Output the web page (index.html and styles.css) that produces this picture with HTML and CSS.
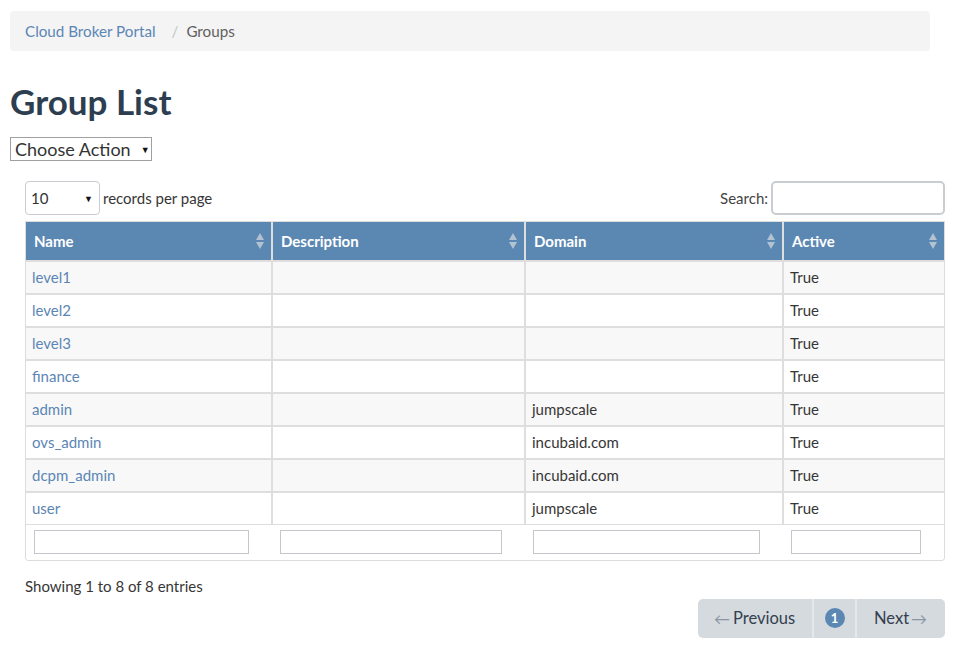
FILE: index.html
```html
<!DOCTYPE html>
<html>
<head>
<meta charset="utf-8">
<link rel="stylesheet" href="styles.css">
</head>
<body>
<div class="page">
  <ol class="breadcrumb">
    <li><a href="#">Cloud Broker Portal</a></li>
    <li class="sep">/</li>
    <li class="current">Groups</li>
  </ol>
  <h1 class="title">Group List</h1>
  <div class="action-select">Choose Action <span class="caret">▼</span></div>

  <div class="dt">
    <div class="dt-top">
      <div class="length">
        <div class="len-select">10 <span class="caret">▼</span></div>
        <span>records per page</span>
      </div>
      <div class="search">
        <span>Search:</span>
        <div class="search-input"></div>
      </div>
    </div>

    <div class="table-wrap">
      <table class="grid">
        <colgroup>
          <col class="c1"><col class="c2"><col class="c3"><col class="c4">
        </colgroup>
        <thead>
          <tr>
            <th>Name<span class="sort"></span></th>
            <th>Description<span class="sort"></span></th>
            <th>Domain<span class="sort"></span></th>
            <th>Active<span class="sort"></span></th>
          </tr>
        </thead>
        <tbody>
          <tr><td><a href="#">level1</a></td><td></td><td></td><td>True</td></tr>
          <tr><td><a href="#">level2</a></td><td></td><td></td><td>True</td></tr>
          <tr><td><a href="#">level3</a></td><td></td><td></td><td>True</td></tr>
          <tr><td><a href="#">finance</a></td><td></td><td></td><td>True</td></tr>
          <tr><td><a href="#">admin</a></td><td></td><td>jumpscale</td><td>True</td></tr>
          <tr><td><a href="#">ovs_admin</a></td><td></td><td>incubaid.com</td><td>True</td></tr>
          <tr><td><a href="#">dcpm_admin</a></td><td></td><td>incubaid.com</td><td>True</td></tr>
          <tr><td><a href="#">user</a></td><td></td><td>jumpscale</td><td>True</td></tr>
        </tbody>
        <tfoot>
          <tr>
            <td><div class="finput"></div></td>
            <td><div class="finput"></div></td>
            <td><div class="finput"></div></td>
            <td><div class="finput"></div></td>
          </tr>
        </tfoot>
      </table>
    </div>

    <div class="info">Showing 1 to 8 of 8 entries</div>
    <div class="pager-row">
      <div class="pager">
        <span class="pg prev"><span class="arr">&larr;</span>Previous</span>
        <span class="pg num"><span class="badge">1</span></span>
        <span class="pg next">Next<span class="arr">&rarr;</span></span>
      </div>
    </div>
  </div>
</div>
</body>
</html>
```

FILE: styles.css
```css
* { box-sizing: border-box; }
html, body { margin: 0; padding: 0; background: #fff; }
body {
  font-family: Lato, "Open Sans", "Liberation Sans", sans-serif;
  font-size: 15px;
  color: #363636;
}
a { color: #5b86b4; text-decoration: none; }
.page { padding: 11px 24px 0 10px; }

.breadcrumb {
  list-style: none;
  margin: 0;
  padding: 0 15px;
  width: 920px;
  height: 40px;
  background: #f4f4f4;
  border-radius: 4px;
  display: flex;
  align-items: center;
  font-size: 15.2px;
}
.breadcrumb li { line-height: 20px; }
.breadcrumb .sep { color: #c4c4c4; padding: 0 8px 0 16px; }
.breadcrumb .current { color: #606060; }

.title {
  margin: 32px 0 0 0;
  font-size: 35px;
  font-weight: 700;
  color: #2d3e50;
  line-height: 36px;
}

.action-select {
  margin-top: 18px;
  display: inline-flex;
  align-items: center;
  height: 24px;
  width: 142px;
  padding: 0 0 0 4px;
  border: 1px solid #a0a0a0;
  font-size: 18px;
  color: #333;
  background: #fff;
}
.action-select .caret { font-size: 9px; margin-left: 10px; color: #111; }

.dt { padding-left: 15px; margin-top: 20px; width: 935px; }
.dt-top {
  display: flex;
  justify-content: space-between;
  align-items: center;
  height: 34px;
  margin-bottom: 6px;
}
.length { display: flex; align-items: center; gap: 3px; }
.len-select {
  width: 75px;
  height: 34px;
  border: 1px solid #c9cdd1;
  border-radius: 4px;
  display: flex;
  align-items: center;
  justify-content: space-between;
  padding: 0 6px 0 5px;
  font-size: 15px;
  color: #333;
}
.len-select .caret { font-size: 9px; color: #111; }
.search { display: flex; align-items: center; gap: 3px; color: #444; }
.search-input {
  width: 174px;
  height: 34px;
  border: 2px solid #c9cdd1;
  border-radius: 5px;
}

.table-wrap {
  width: 920px;
  border: 1px solid #dcdcdc;
  border-top: none;
  border-radius: 0 0 4px 4px;
  overflow: hidden;
}
.grid {
  width: 100%;
  border-collapse: collapse;
  table-layout: fixed;
}
.c1 { width: 246px; }
.c2 { width: 253px; }
.c3 { width: 258px; }
.c4 { width: 161px; }

.grid th {
  background: #5b87b3;
  color: #fff;
  font-weight: 700;
  text-align: left;
  height: 39px;
  padding: 0 8px;
  position: relative;
  border-left: 2px solid #dedede;
  border-top: 1px solid #dedede;
  border-bottom: 2px solid #dedede;
}
.grid th:first-child, .grid td:first-child { border-left: none; }
.sort {
  position: absolute;
  right: 6px;
  top: 50%;
  margin-top: -8px;
  width: 9px;
  height: 16px;
}
.sort::before, .sort::after {
  content: "";
  position: absolute;
  left: 0;
  border-left: 4.5px solid transparent;
  border-right: 4.5px solid transparent;
}
.sort::before { top: 0; border-bottom: 7px solid #b3c2d1; }
.sort::after { bottom: 0; border-top: 7px solid #b3c2d1; }

.grid td {
  height: 33px;
  padding: 0 6px;
  border-left: 2px solid #dedede;
  border-bottom: 2px solid #dedede;
}
.grid td:first-child { padding-left: 6px; }
.grid tbody tr:nth-child(odd) td { background: #f8f8f8; }
.grid tbody tr:last-child td { border-bottom: 1px solid #dedede; }
.grid tfoot td {
  border-left: none;
  border-bottom: none;
  height: 35px;
  padding: 5px 23px 5px 8px;
  background: #fff;
}
.grid tfoot td:first-child { padding-left: 8px; }
.finput {
  width: 100%;
  height: 24px;
  border: 1px solid #c3c7cb;
}

.info { margin-top: 16px; color: #363636; line-height: 18px; }
.pager-row { display: flex; justify-content: flex-end; width: 920px; margin-top: 4px; }
.pager {
  display: flex;
  height: 39px;
  background: #d5dadf;
  border-radius: 5px;
  overflow: hidden;
  font-size: 16.5px;
  color: #34404e;
}
.pg { display: flex; align-items: center; }
.prev { width: 116px; padding-left: 16px; border-right: 2px solid #e5e8eb; }
.num { width: 43px; justify-content: center; border-right: 2px solid #e5e8eb; }
.next { width: 88px; padding-left: 17px; }
.arr { color: #8a96a2; font-size: 16px; }
.prev .arr { margin-right: 3px; }
.next .arr { margin-left: 2px; }
.badge {
  width: 20px;
  height: 20px;
  border-radius: 50%;
  background: #5b87b3;
  color: #fff;
  font-size: 13px;
  font-weight: 700;
  display: flex;
  align-items: center;
  justify-content: center;
}
```
